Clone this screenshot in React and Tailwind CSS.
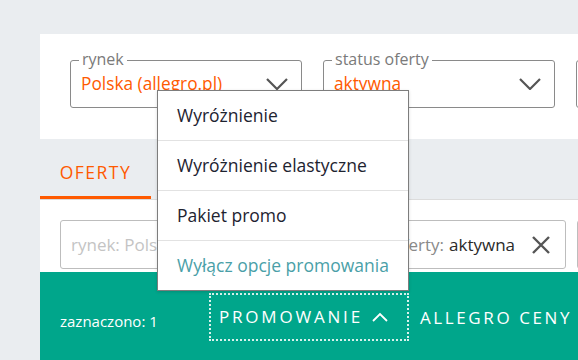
import React from "react";

function Chevron({ className = "" }) {
  return (
    <svg width="22" height="12" viewBox="0 0 22 12" className={className}>
      <polyline points="1,1 11,11 21,1" fill="none" stroke="#555" strokeWidth="2.2" />
    </svg>
  );
}

function Select({ label, value }) {
  return (
    <div className="relative w-[232px] h-[48px] shrink-0 border border-[#8a8a8a] rounded-[3px] flex items-center pl-[10px] pr-[13px]">
      <span className="absolute left-[8px] top-[-13px] bg-white px-[3px] text-[16px] leading-[22px] text-[#7a7a7a]">{label}</span>
      <span className="flex-1 text-[17.3px] text-[#ff5a00] whitespace-nowrap overflow-hidden">{value}</span>
      <Chevron />
    </div>
  );
}

export default function App() {
  return (
    <div className="relative w-[578px] h-[360px] overflow-hidden bg-[#eaedf0] font-['Open_Sans',sans-serif]">
      <div className="pt-[34px] pl-[40px] w-[760px]">
        <div className="bg-white h-[105px] flex gap-[21px] pl-[30px] pt-[26px]">
          <Select label="rynek" value="Polska (allegro.pl)" />
          <Select label="status oferty" value="aktywna" />
          <div className="w-[232px] h-[48px] shrink-0 border border-[#8a8a8a] rounded-[3px]" />
        </div>
        <div className="h-[60px] flex items-end">
          <div className="w-[111px] h-[60px] flex items-center justify-center pt-[10px] border-b-[3px] border-[#ff5a00] text-[17.5px] tracking-[1.5px] text-[#ff5a00]">
            OFERTY
          </div>
        </div>
        <div className="bg-white border-t border-[#dcdcdc] pt-[20px] pb-[3px] pl-[20px] flex gap-[11px]">
          <div className="w-[506px] h-[49px] border border-[#bdbdbd] rounded-[3px] flex items-center pl-[10px] pr-[14px] text-[17px] whitespace-nowrap">
            <span className="text-[#c4c4c4]">rynek: Polska (allegro.pl)</span>
            <span className="flex-1" />
            <span className="text-[#8a8a8a]">status oferty: </span>
            <span className="text-[#2a2a2a] ml-[5px]">aktywna</span>
            <svg width="20" height="20" viewBox="0 0 20 20" className="ml-[16px]">
              <path d="M2 2 L18 18 M18 2 L2 18" stroke="#555" strokeWidth="2.4" fill="none" />
            </svg>
          </div>
          <div className="w-[120px] h-[49px] border border-[#bdbdbd] rounded-[3px]" />
        </div>
        <div className="bg-[#00a68b] h-[100px] flex items-start pt-[21px] pl-[20px] text-white">
          <span className="text-[15px] mt-[17px] w-[149px]">zaznaczono: 1</span>
          <div className="w-[200px] h-[48px] border-2 border-dotted border-[#d8f2ec] flex items-center pl-[8px] gap-[9px]">
            <span className="text-[17px] tracking-[2.8px]">PROMOWANIE</span>
            <svg width="16" height="10" viewBox="0 0 16 10">
              <polyline points="1,9 8,2 15,9" fill="none" stroke="white" strokeWidth="1.8" />
            </svg>
          </div>
          <span className="text-[17px] tracking-[2.6px] ml-[11px] mt-[12px] whitespace-nowrap">ALLEGRO CENY</span>
        </div>
      </div>

      <div className="absolute left-[157px] top-[90px] w-[252px] bg-white border border-[#7d7d7d] shadow-[0_1px_3px_rgba(0,0,0,0.15)] text-[17.5px]">
        <div className="h-[50px] border-b border-[#e2e2e2] flex items-center pl-[19px] text-[#1e2330]">Wyróżnienie</div>
        <div className="h-[50px] border-b border-[#e2e2e2] flex items-center pl-[19px] text-[#1e2330]">Wyróżnienie elastyczne</div>
        <div className="h-[50px] border-b border-[#e2e2e2] flex items-center pl-[19px] text-[#1e2330]">Pakiet promo</div>
        <div className="h-[49px] flex items-center pl-[19px] text-[#4a9fa8]">Wyłącz opcje promowania</div>
      </div>
    </div>
  );
}
